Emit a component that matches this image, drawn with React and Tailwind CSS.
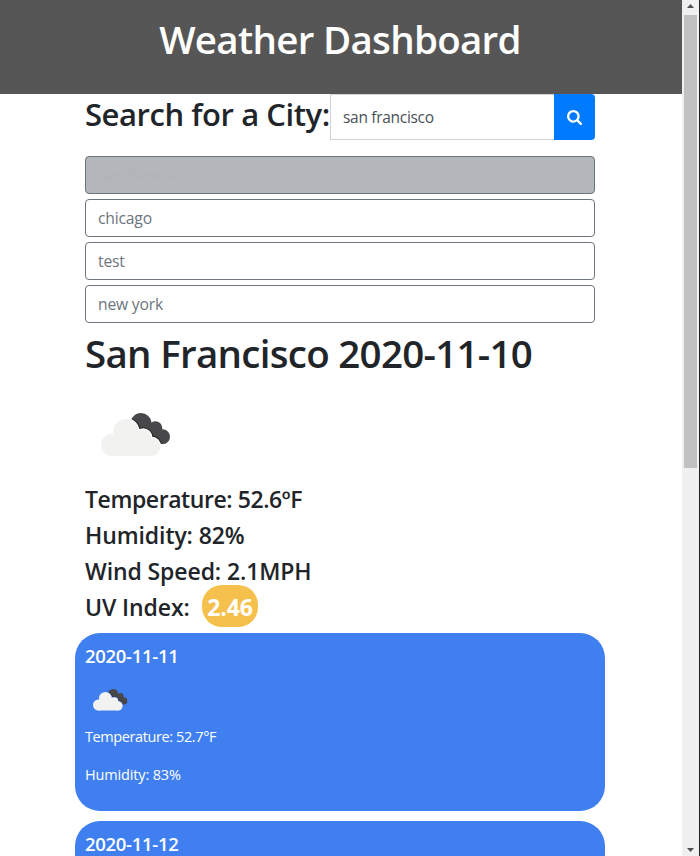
import React, { useId } from "react";

const history = ["chicago", "test", "new york"];

function SearchIcon() {
  return (
    <svg viewBox="64 128 1664 1664" className="mt-px size-[15px]" fill="currentColor" aria-hidden="true">
      <path d="M1216 832q0-185-131.5-316.5t-316.5-131.5-316.5 131.5-131.5 316.5 131.5 316.5 316.5 131.5 316.5-131.5 131.5-316.5zm512 832q0 52-38 90t-90 38q-54 0-90-38l-343-342q-179 124-399 124-143 0-273.5-55.5t-225-150-150-225-55.5-273.5 55.5-273.5 150-225 225-150 273.5-55.5 273.5 55.5 225 150 150 225 55.5 273.5q0 220-124 399l343 343q37 37 37 90z" />
    </svg>
  );
}

function FrontShape() {
  return (
    <>
      <circle cx="27" cy="60" r="11" />
      <circle cx="40.8" cy="46.8" r="12.8" />
      <circle cx="58.2" cy="52.5" r="8.2" />
      <circle cx="66" cy="61.7" r="9.3" />
      <path d="M27 50 L40 45 L58 50 L66 60 V71 H27 Z" />
    </>
  );
}

function Cloud({ className }) {
  const id = useId();
  const clip = `${id}-back`;
  const mask = `${id}-gap`;
  return (
    <svg viewBox="0 0 100 100" className={className} aria-hidden="true">
      <clipPath id={clip}>
        <circle cx="56" cy="38.7" r="10.6" />
        <circle cx="70.5" cy="43" r="6.8" />
        <circle cx="77.6" cy="51.7" r="7.4" />
        <path d="M50 40 L70 38 L78 50 L77 59 L64 58 Z" />
      </clipPath>
      <mask id={mask} maskUnits="userSpaceOnUse" x="0" y="0" width="100" height="100">
        <rect width="100" height="100" fill="white" />
        <g fill="black" stroke="black" strokeWidth="2"><FrontShape /></g>
      </mask>
      <g mask={`url(#${mask})`}>
        <g clipPath={`url(#${clip})`}>
          <rect width="100" height="100" fill="#48484a" />
          <g fill="none" stroke="#252527" strokeWidth="4"><FrontShape /></g>
        </g>
      </g>
      <g fill="#f2f2f1"><FrontShape /></g>
    </svg>
  );
}

function ForecastCard({ date, temperature, humidity }) {
  return (
    <section className="-mx-2.5 mb-2.5 h-[178px] shrink-0 rounded-[25px] bg-[#407ff0] px-2.5 pt-[11px] text-white">
      <h5 className="text-[18.5px] font-semibold leading-6 tracking-[-0.3px]">{date}</h5>
      <Cloud className="mt-[7px] block size-[50px]" />
      <p className="text-[14.5px] leading-6 tracking-[-0.4px]">Temperature: {temperature}°F</p>
      <p className="mt-3.5 text-[14.5px] leading-6 tracking-[-0.15px]">Humidity: {humidity}%</p>
    </section>
  );
}

function Scrollbar() {
  return (
    <div className="flex h-full w-[18px] flex-col items-center border-r border-[#202124] bg-[#f0f0f0]">
      <div className="flex h-[15px] w-full items-center justify-center pb-[3px]">
        <svg width="7" height="4" viewBox="0 0 7 4"><path d="M3.5 0 L7 4 H0 Z" fill="#505050" /></svg>
      </div>
      <div className="h-[453px] w-[13px] bg-[#c1c1c1]" />
      <div className="mt-auto flex h-3 w-full items-center justify-center">
        <svg width="7" height="4" viewBox="0 0 7 4"><path d="M0 0 H7 L3.5 4 Z" fill="#505050" /></svg>
      </div>
    </div>
  );
}

export default function App() {
  return (
    <div className="flex h-[856px] w-[700px] overflow-hidden bg-white font-['Open_Sans','Noto_Sans',sans-serif] text-[#212529]">
      <div className="flex min-w-0 flex-1 flex-col">
        <header className="h-[94px] shrink-0 bg-[#565656] pr-0.5 pt-[15px] text-center text-white">
          <h1 className="whitespace-nowrap text-[38.5px] font-semibold leading-[48px] tracking-[-0.7px]">Weather Dashboard</h1>
        </header>
        <main className="ml-[85px] flex w-[510px] flex-1 flex-col">
          <div className="flex h-[46px] shrink-0">
            <h2 className="w-[245px] shrink-0 whitespace-nowrap pt-px text-[31px] font-semibold leading-[38px] tracking-[-0.44px]">Search for a City:</h2>
            <div className="flex min-w-0 flex-1 items-center border border-r-0 border-[#ced4da] pl-3 pt-0.5 text-[15.5px] tracking-[-0.3px] text-[#495057]">san francisco</div>
            <button className="flex w-[41px] items-center justify-center rounded-r bg-[#007bff] text-white"><SearchIcon /></button>
          </div>
          <div className="mt-4 flex shrink-0 flex-col gap-[5px]">
            <div className="flex h-[38px] items-center rounded border border-[#6c757d] bg-[#b3b7bc] px-3 pt-0.5 text-[15.5px] tracking-[-0.3px] text-[#b0b4b9]">san francisco</div>
            {history.map((city) => (
              <div key={city} className="flex h-[38px] items-center rounded border border-[#6c757d] px-3 pt-0.5 text-[15.7px] tracking-[-0.2px] text-[#6c757d]">{city}</div>
            ))}
          </div>
          <h1 className="mt-1.5 shrink-0 whitespace-nowrap text-[38.5px] font-semibold leading-[48px] tracking-[-0.7px]">San Francisco 2020-11-10</h1>
          <Cloud className="mt-2 block size-[100px] shrink-0" />
          <div className="shrink-0 text-[23px] font-semibold leading-7 tracking-[-0.1px]">
            <p className="tracking-[-0.42px]">Temperature: 52.6ºF</p>
            <p className="mt-2">Humidity: 82%</p>
            <p className="mt-2">Wind Speed: 2.1MPH</p>
            <p className="mt-2 flex h-7 items-center">
              <span className="w-[117px] shrink-0">UV Index:</span>
              <span className="-mt-0.5 flex h-[42px] w-14 shrink-0 items-center justify-center rounded-[20px] bg-[#f6c04d] pt-0.5 font-bold text-white">2.46</span>
            </p>
          </div>
          <div className="mt-3 flex flex-col">
            <ForecastCard date="2020-11-11" temperature="52.7" humidity="83" />
            <ForecastCard date="2020-11-12" temperature="53.1" humidity="80" />
          </div>
        </main>
      </div>
      <Scrollbar />
    </div>
  );
}
